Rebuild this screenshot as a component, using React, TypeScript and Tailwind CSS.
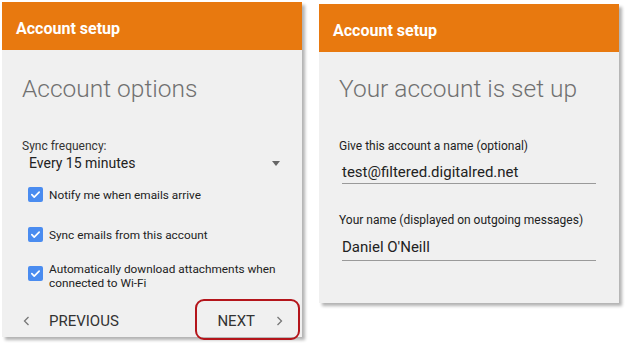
import React from 'react';

const Check = () => (
  <div className="w-[15px] h-[15px] rounded-[2px] bg-[#4a8cf0] flex items-center justify-center shrink-0">
    <svg width="11" height="11" viewBox="0 0 12 12" fill="none">
      <path d="M2 6.2l2.6 2.6L10 3.4" stroke="white" strokeWidth="1.8" strokeLinecap="round" strokeLinejoin="round" />
    </svg>
  </div>
);

const Chevron = ({ dir }: { dir: 'left' | 'right' }) => (
  <svg width="7" height="10" viewBox="0 0 7 10" fill="none">
    <path d={dir === 'left' ? 'M5.5 1L1.5 5l4 4' : 'M1.5 1l4 4-4 4'} stroke="#777" strokeWidth="1.3" />
  </svg>
);

const Header = () => (
  <div className="h-[48px] bg-[#e8790f] flex items-center px-[14px] pt-[5px] text-white text-[16px] font-bold">
    Account setup
  </div>
);

const Field = ({ label, value, className }: { label: string; value: string; className: string }) => (
  <div className={`flex flex-col ${className}`}>
    <span className="text-[12px] leading-[14px] text-[#222]">{label}</span>
    <div className="ml-[3px] mr-[3px] mt-[10px] leading-[18px] pb-[2px] border-b border-[#9a9a9a] text-[15px] text-[#222]">{value}</div>
  </div>
);

export default function App() {
  const font = { fontFamily: 'Roboto, "Liberation Sans", sans-serif' };
  return (
    <div className="w-[632px] h-[350px] bg-white flex items-start" style={font}>
      {/* left panel */}
      <div className="ml-[2px] mt-[2px] w-[300px] h-[335px] bg-[#f0f0f0] flex flex-col shadow-[3px_3px_3px_rgba(0,0,0,0.3)]">
        <Header />
        <div className="px-[20px] pt-[23px] text-[24.5px] font-light text-[#707070] leading-[32px]">Account options</div>
        <div className="px-[20px] pt-[34px] text-[12px] text-[#333] leading-[14px]">Sync frequency:</div>
        <div className="pl-[27px] pr-[22px] pt-[1px] flex items-center justify-between text-[14px] text-[#222] leading-[18px]">
          <span>Every 15 minutes</span>
          <span className="w-0 h-0 border-l-[4px] border-r-[4px] border-t-[5px] border-l-transparent border-r-transparent border-t-[#666]" />
        </div>
        <div className="pl-[26px] pr-[16px] pt-[15px] flex flex-col text-[11.8px] text-[#222] leading-[14px]">
          <div className="flex items-center gap-[6px]">
            <Check />
            <span>Notify me when emails arrive</span>
          </div>
          <div className="flex items-center gap-[6px] mt-[25px]">
            <Check />
            <span>Sync emails from this account</span>
          </div>
          <div className="flex items-start gap-[6px] mt-[20px]">
            <div className="mt-[4px]">
              <Check />
            </div>
            <span>Automatically download attachments when connected to Wi-Fi</span>
          </div>
        </div>
        <div className="mt-auto h-[40px] pt-[8px] flex items-center text-[15px] text-[#333] relative">
          <span className="ml-[21px]"><Chevron dir="left" /></span>
          <span className="ml-[19px]">PREVIOUS</span>
          <span className="ml-auto">NEXT</span>
          <span className="ml-[21px] mr-[19px]"><Chevron dir="right" /></span>
          <div className="absolute left-[193px] top-[2px] w-[105px] h-[41px] border-2 border-[#b4151b] rounded-[9px]" />
        </div>
      </div>
      {/* right panel */}
      <div className="ml-[17px] mt-[4px] w-[300px] h-[299px] bg-[#f0f0f0] flex flex-col shadow-[3px_3px_3px_rgba(0,0,0,0.3)]">
        <Header />
        <div className="px-[20px] pt-[21px] text-[24.5px] font-light text-[#707070] leading-[32px]">Your account is set up</div>
        <div className="px-[20px] pt-[34px] flex flex-col">
          <Field label="Give this account a name (optional)" value="test@filtered.digitalred.net" className="" />
          <Field label="Your name (displayed on outgoing messages)" value="Daniel O'Neill" className="mt-[29px] [&>div]:mt-[11px] [&>div]:pb-[4px]" />
        </div>
      </div>
    </div>
  );
}
